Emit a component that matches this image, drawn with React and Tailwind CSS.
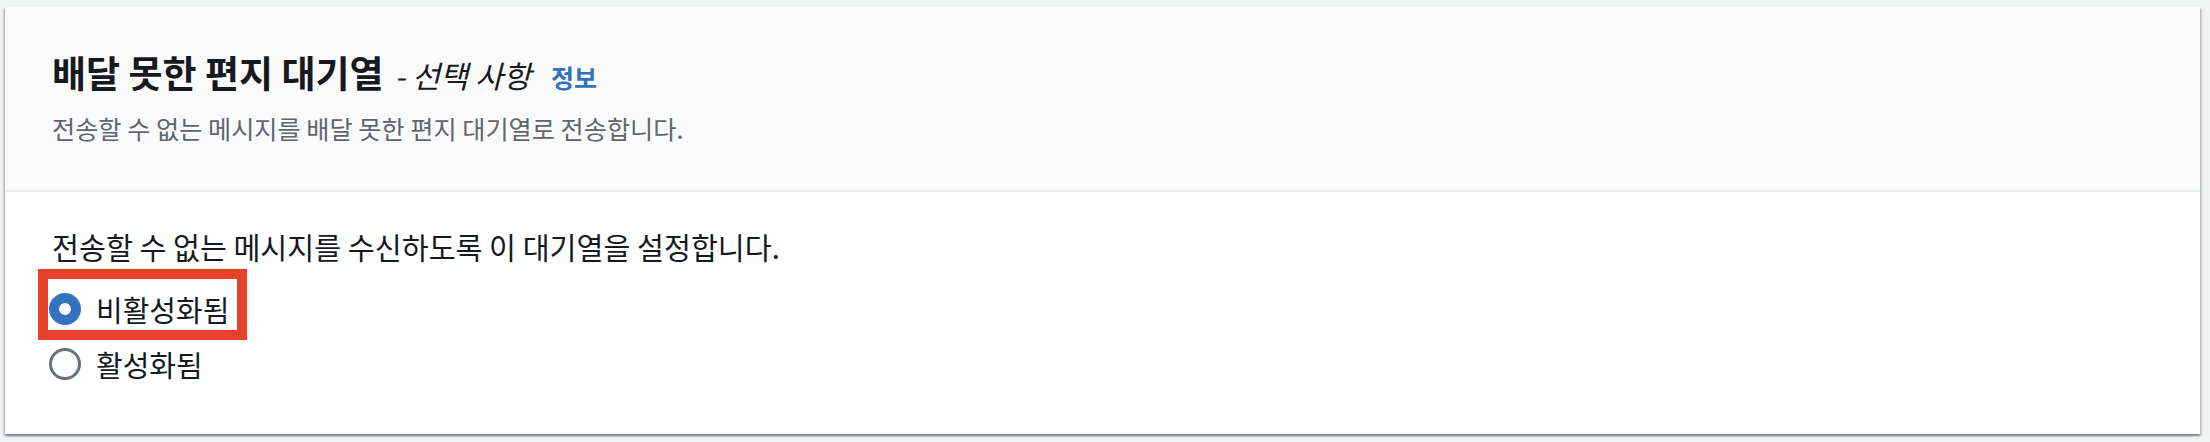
const font = { fontFamily: '"Noto Sans CJK KR", "Noto Sans", sans-serif' }

function Radio({ checked }) {
  return checked ? (
    <span className="block w-8 h-8 shrink-0 rounded-full border-[10px] border-[#3372bd] bg-white" />
  ) : (
    <span className="block w-8 h-8 shrink-0 rounded-full border-[3px] border-[#687078] bg-white" />
  )
}

export default function App() {
  return (
    <div className="min-h-screen bg-[#f2f3f3] pt-[7px] pb-[8px] pl-[5px] pr-[10px]" style={font}>
      <div className="bg-white shadow-[0_2px_2px_0_rgba(0,28,36,0.35),2px_2px_2px_0_rgba(0,28,36,0.15),-2px_2px_2px_0_rgba(0,28,36,0.15)]">
        <div className="h-[185px] bg-[#fafafa] border-b-2 border-[#eaeded] px-[47px] pt-[43px]">
          <div className="flex items-baseline text-[#16191f]">
            <h2 className="text-[37px] leading-[44px] font-bold">배달 못한 편지 대기열</h2>
            <span className="ml-[11px] text-[30.5px] leading-[44px] italic">- 선택 사항</span>
            <a className="ml-[20px] text-[25px] leading-[44px] font-bold text-[#3372bd]">정보</a>
          </div>
          <p className="mt-[13px] text-[25.2px] leading-[32px] text-[#5f6670]">
            전송할 수 없는 메시지를 배달 못한 편지 대기열로 전송합니다.
          </p>
        </div>
        <div className="h-[242px] px-[47px] pt-[36px]">
          <p className="text-[29.3px] leading-[36px] text-[#16191f]">
            전송할 수 없는 메시지를 수신하도록 이 대기열을 설정합니다.
          </p>
          <div className="mt-[17px] -ml-[3px] flex flex-col">
            <label className="relative flex items-center gap-[15px] h-[55px]">
              <Radio checked />
              <span className="text-[29px] leading-[36px] text-[#16191f]">비활성화됨</span>
              <span className="absolute -left-[11px] -top-[12px] w-[209px] h-[71px] border-[10px] border-[#e9422b] pointer-events-none" />
            </label>
            <label className="flex items-center gap-[15px] h-[55px]">
              <Radio />
              <span className="text-[29px] leading-[36px] text-[#16191f]">활성화됨</span>
            </label>
          </div>
        </div>
      </div>
    </div>
  )
}
